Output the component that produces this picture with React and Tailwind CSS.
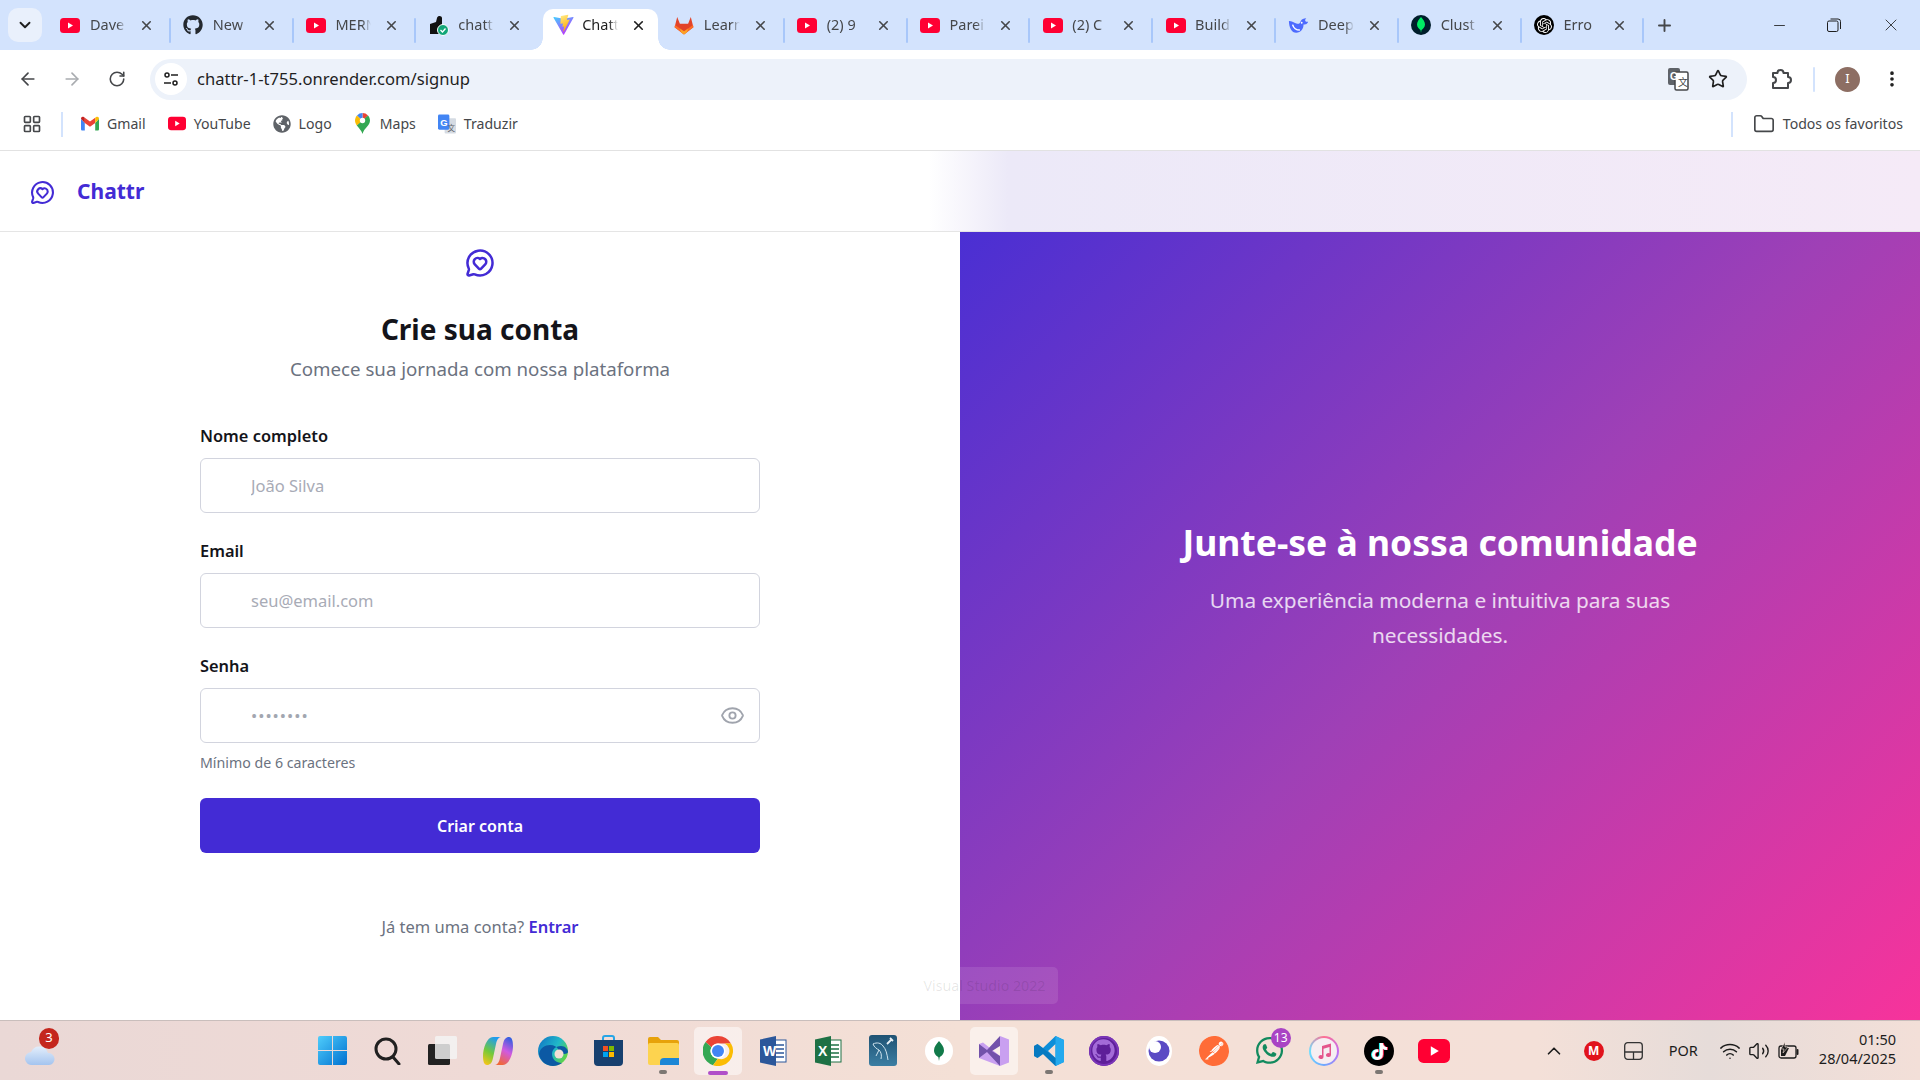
import React from "react";
import {
  ChevronDown, X, ArrowLeft, ArrowRight, RotateCw, Star, EllipsisVertical, LayoutGrid,
  Folder, Eye, MessageCircleHeart, Plus, Minus, ChevronUp, Wifi, Volume2,
} from "lucide-react";
import { FaGithub, FaGlobeAmericas, FaWhatsapp, FaTiktok } from "react-icons/fa";
import { SiOpenai, SiPostman } from "react-icons/si";

const Yt = ({ w = 20, h = 15 }) => (
  <svg width={w} height={h} viewBox="0 0 20 15">
    <rect width="20" height="15" rx="3.5" fill="#ff0033" />
    <path d="M8 4.5v6l5-3z" fill="#fff" />
  </svg>
);

const Vite = () => (
  <svg width="21" height="22" viewBox="0 0 410 404">
    <defs>
      <linearGradient id="vitea" x1="0" y1="0" x2="0.6" y2="1">
        <stop offset="0" stopColor="#41d1ff" />
        <stop offset="1" stopColor="#bd34fe" />
      </linearGradient>
      <linearGradient id="viteb" x1="0.2" y1="0" x2="0.5" y2="1">
        <stop offset="0" stopColor="#ffea83" />
        <stop offset="1" stopColor="#ffa800" />
      </linearGradient>
    </defs>
    <path fill="url(#vitea)" d="M399.641 59.525L215.643 388.545c-3.799 6.793-13.559 6.833-17.415.073L10.582 59.556C6.38 52.19 12.68 43.266 21.028 44.76l184.195 32.923a10 10 0 0 0 3.555-.006L389.119 44.8c8.32-1.516 14.65 7.337 10.522 14.725z" />
    <path fill="url(#viteb)" d="M292.965 1.574L156.801 28.255a5 5 0 0 0-4.03 4.611l-8.376 141.464c-.197 3.332 2.863 5.918 6.115 5.168l37.91-8.749c3.547-.818 6.752 2.306 6.023 5.873l-11.263 55.153c-.758 3.712 2.727 6.886 6.352 5.785l23.415-7.114c3.63-1.102 7.118 2.081 6.35 5.796l-17.899 86.633c-1.12 5.419 6.088 8.374 9.094 3.728l2.008-3.103 110.954-221.428c1.858-3.707-1.346-7.935-5.418-7.15l-39.022 7.532c-3.667.707-6.787-2.708-5.752-6.296l25.469-88.291c1.036-3.594-2.095-7.012-5.766-6.293z" />
  </svg>
);

const Gitlab = () => (
  <svg width="20" height="21" viewBox="0 0 20 20">
    <path d="M10 19L0.6 11.8 3.2 1.5l2.7 6.7h8.2l2.7-6.7 2.6 10.3z" fill="#e24329" />
    <path d="M10 19l-4.1-3.2L0.6 11.8 1 9.5l5 3.5z" fill="#fc6d26" />
    <path d="M10 19l4.1-3.2 5.3-4-.4-2.3-5 3.5z" fill="#fc6d26" />
    <path d="M10 19l-3-2.3-1-3.7 4 2.8 4-2.8-1 3.7z" fill="#fca326" />
  </svg>
);

const Auth = () => (
  <svg width="20" height="21" viewBox="0 0 20 21">
    <path d="M1 9l6-2 1-4c1-3 5-2 5 0v9l-3 7H1z" fill="#111" />
    <circle cx="14" cy="15" r="5.5" fill="#12a678" stroke="#fff" />
    <path d="M11.5 15l2 2 3-3.5" stroke="#fff" strokeWidth="1.3" fill="none" />
  </svg>
);

const Deepseek = () => (
  <svg width="21" height="19" viewBox="0 0 23 20">
    <path d="M1 5c3 0 6 2 9 3 2 .7 3-.5 4-3 1-2 3-3 6-3-1 1-1.500 2-1 3 .5 1 1 1 3 1-1 3-3 3-5 3 0 5-3 9-8 9-5 0-8-6-8-13z" fill="#4d6bfe" />
    <path d="M5 9c1 3.500 4 6 8 6" stroke="#fff" strokeWidth="1.600" fill="none" />
    <circle cx="15" cy="7" r="1" fill="#fff" />
  </svg>
);

const Mongo = () => (
  <span className="flex h-[20px] w-[20px] items-center justify-center rounded-full bg-[#001e2b]">
    <svg width="8" height="16" viewBox="0 0 8 16">
      <path d="M4 0c2 2.500 4 4.500 4 7.500S5.500 12 4.500 13L4 16l-.5-3C2.500 12 0 10.500 0 7.500S2 2.500 4 0z" fill="#00ed64" />
    </svg>
  </span>
);

const Openai = () => (
  <span className="flex h-[20px] w-[20px] items-center justify-center rounded-full bg-black text-white">
    <SiOpenai size={15} />
  </span>
);

const tabs = [
  { title: "Dave", icon: <Yt /> },
  { title: "New", icon: <FaGithub size={20} className="text-[#24292f]" /> },
  { title: "MERN", icon: <Yt /> },
  { title: "chatt", icon: <Auth /> },
  { title: "Chatt", icon: <Vite />, active: true },
  { title: "Learn", icon: <Gitlab /> },
  { title: "(2) 9", icon: <Yt /> },
  { title: "Parei", icon: <Yt /> },
  { title: "(2) C", icon: <Yt /> },
  { title: "Build", icon: <Yt /> },
  { title: "Deep", icon: <Deepseek /> },
  { title: "Clust", icon: <Mongo /> },
  { title: "Erro", icon: <Openai /> },
];

const TabStrip = () => (
  <div className="flex h-[50px] shrink-0 items-center bg-[#d3e3fd] text-[14.500px]">
    <div className="ml-[8px] mr-[6px] flex h-[34px] w-[34px] items-center justify-center rounded-[10px] bg-[#e9f0fc]">
      <ChevronDown size={18} strokeWidth={2.5} className="text-[#1f1f1f]" />
    </div>
    {tabs.map((t, i) => (
      <div key={i} className="relative flex h-[50px] w-[122.800px] items-end">
        {t.active ? (
          <div className="relative mx-[4px] flex h-[41px] w-[115px] items-center rounded-t-[10px] bg-white pb-[9px] pl-[10px]">
            <span className="absolute bottom-0 left-[-12px] h-[12px] w-[12px] bg-[radial-gradient(circle_at_0_0,transparent_11.5px,white_12px)]" />
            <span className="absolute bottom-0 right-[-12px] h-[12px] w-[12px] bg-[radial-gradient(circle_at_100%_0,transparent_11.5px,white_12px)]" />
            <span className="w-[21px]">{t.icon}</span>
            <span className="ml-[8px] w-[36px] whitespace-nowrap text-[#1f1f1f] [mask-image:linear-gradient(90deg,black_75%,transparent)]">{t.title}</span>
            <X size={15} strokeWidth={2.6} className="ml-[13px] text-[#1f1f1f]" />
          </div>
        ) : (
          <div className="flex h-[50px] w-full items-center pl-[12px] pr-[17px]">
            <span className="flex w-[21px] justify-center">{t.icon}</span>
            <span className="ml-[9px] w-[36px] whitespace-nowrap text-[#45474a] [mask-image:linear-gradient(90deg,black_75%,transparent)]">{t.title}</span>
            <X size={15} strokeWidth={2.6} className="ml-[13px] text-[#45474a]" />
          </div>
        )}
        {i !== 3 && i !== 4 && (
          <span className="absolute right-0 top-[18px] h-[25px] w-[2px] rounded-full bg-[#a8c7fa]" />
        )}
      </div>
    ))}
    <Plus size={19} strokeWidth={2.4} className="ml-[11px] text-[#45474a]" />
    <div className="ml-auto flex items-center text-[#1f1f1f]">
      <Minus size={17} strokeWidth={1.2} />
      <svg width="14" height="14" viewBox="0 0 14 14" className="ml-[39px]" fill="none" stroke="#1f1f1f" strokeWidth="1">
        <rect x="0.5" y="3" width="10.500" height="10.500" rx="1.500" />
        <path d="M3.500 1h7.500a2.500 2.500 0 0 1 2.500 2.500V11" />
      </svg>
      <X size={20} strokeWidth={1} className="ml-[40px] mr-[19px]" />
    </div>
  </div>
);

const Toolbar = () => (
  <div className="flex h-[58px] shrink-0 items-center rounded-t-[10px] bg-white text-[#45474a]">
    <ArrowLeft size={20} strokeWidth={2} className="ml-[18px]" />
    <ArrowRight size={20} strokeWidth={2} className="ml-[24px] text-[#a9acb0]" />
    <RotateCw size={18} strokeWidth={2.1} className="ml-[26px]" />
    <div className="ml-[24px] flex h-[41px] w-[1597px] items-center rounded-full bg-[#edf2fa] pl-[5px] pr-[19px]">
      <span className="flex h-[32px] w-[32px] items-center justify-center rounded-full bg-white">
        <svg width="16" height="16" viewBox="0 0 16 16" fill="none" stroke="#1f1f1f" strokeWidth="1.500">
          <circle cx="4" cy="4" r="2" />
          <circle cx="12" cy="12" r="2" />
          <path d="M8 4h7M1 12h7" />
        </svg>
      </span>
      <span className="ml-[10px] text-[16.600px] text-[#1f1f1f]">chattr-1-t755.onrender.com/signup</span>
      <svg width="22" height="24" viewBox="0 0 22 24" className="ml-auto">
        <rect x="1" y="1" width="12" height="17" rx="2" fill="#5f6368" />
        <rect x="8" y="5" width="13" height="18" rx="1.500" fill="#fff" stroke="#45474a" strokeWidth="1.500" />
        <text x="3" y="13" fontSize="10" fontWeight="700" fill="#fff" fontFamily="'Liberation Sans', sans-serif">G</text>
        <text x="11" y="19" fontSize="10" fill="#45474a" fontFamily="'Noto Sans CJK SC', sans-serif">文</text>
      </svg>
      <Star size={20} strokeWidth={2} className="ml-[19px] text-[#1f1f1f]" />
    </div>
    <svg width="24" height="24" viewBox="0 0 24 24" fill="none" stroke="#45474a" strokeWidth="2" strokeLinejoin="round" className="ml-[22px]">
      <path d="M4 6h4.500a3 3 0 0 1 6 0H19v4a3 3 0 0 1 0 6v5H4v-5a3 3 0 0 0 0-6z" />
    </svg>
    <span className="ml-[20px] h-[25px] w-[2px] rounded-full bg-[#d3e3fd]" />
    <span className="ml-[20px] flex h-[25px] w-[25px] items-center justify-center rounded-full bg-[#8d6e63] text-[13px] text-white">I</span>
    <EllipsisVertical size={20} strokeWidth={2.4} className="ml-[22px] text-[#1f1f1f]" />
  </div>
);

const Bookmark = ({ icon, label, gap }) => (
  <div className={`flex items-center gap-[8px] ${gap}`}>
    <span className="flex w-[18px] justify-center">{icon}</span>
    <span>{label}</span>
  </div>
);

const Bookmarks = () => (
  <div className="flex h-[43px] shrink-0 items-center border-b border-[#e2e2e2] bg-white pb-[10px] text-[14.100px] text-[#45474a]">
    <LayoutGrid size={20} strokeWidth={2} className="ml-[22px]" />
    <span className="ml-[19px] h-[25px] w-[2px] bg-[#d3e3fd]" />
    <Bookmark
      gap="ml-[18px]"
      label="Gmail"
      icon={
        <svg width="19" height="15" viewBox="0 0 19 15">
          <path d="M0 2.500v11c0 .8.600 1.500 1.400 1.500H4V7z" fill="#4285f4" />
          <path d="M15 15h2.600c.8 0 1.400-.7 1.400-1.500v-11L15 7z" fill="#34a853" />
          <path d="M4 7l5.500 4L15 7V1.500L9.500 5.500 4 1.500z" fill="#ea4335" />
          <path d="M0 2.500L4 7V1.500L2.500.5C1.400-.2 0 .6 0 2.500z" fill="#c5221f" />
          <path d="M19 2.500L15 7V1.500L16.500.5C17.600-.2 19 .6 19 2.500z" fill="#fbbc04" />
        </svg>
      }
    />
    <Bookmark gap="ml-[22px]" label="YouTube" icon={<Yt />} />
    <Bookmark gap="ml-[22px]" label="Logo" icon={<FaGlobeAmericas size={18} className="text-[#5f6368]" />} />
    <Bookmark
      gap="ml-[22px]"
      label="Maps"
      icon={
        <svg width="15" height="21" viewBox="0 0 15 21">
          <path d="M7.500 0a7.500 7.500 0 0 1 5.500 2.400L7.500 8z" fill="#ea4335" />
          <path d="M2 2.400A7.500 7.500 0 0 1 7.500 0v8z" fill="#4285f4" />
          <path d="M0 7.500c0-2 .8-3.800 2-5.100L7.500 8l-5.700 4.500C.7 11 0 9.300 0 7.500z" fill="#fbbc04" />
          <path d="M1.800 12.500L13 2.400c1.200 1.300 2 3.100 2 5.100 0 5-6 7.500-7.500 13.500-.7-3-3.500-5.800-5.700-8.500z" fill="#34a853" />
          <circle cx="7.500" cy="7.500" r="2.700" fill="#fff" />
        </svg>
      }
    />
    <Bookmark
      gap="ml-[22px]"
      label="Traduzir"
      icon={
        <svg width="19" height="20" viewBox="0 0 19 20">
          <rect x="7" y="4" width="12" height="16" rx="1" fill="#d5dbe3" />
          <rect x="0" y="0" width="12" height="16" rx="1.500" fill="#4285f4" />
          <text x="2.500" y="12" fontSize="10" fontWeight="700" fill="#fff" fontFamily="'Liberation Sans', sans-serif">G</text>
          <text x="10" y="17" fontSize="8" fill="#5f6368" fontFamily="'Noto Sans CJK SC', sans-serif">文</text>
        </svg>
      }
    />
    <span className="ml-auto h-[25px] w-[2px] bg-[#d3e3fd]" />
    <Folder size={22} strokeWidth={1.8} className="ml-[20px]" />
    <span className="ml-[8px] mr-[17px]">Todos os favoritos</span>
  </div>
);

const fields = [
  { label: "Nome completo", placeholder: "João Silva", top: "" },
  { label: "Email", placeholder: "seu@email.com", top: "mt-[25px]" },
];

const Field = ({ label, placeholder, top, children, password }) => (
  <div className={top}>
    <label className="block text-[16.400px] font-semibold leading-[26px] text-[#14141a]">{label}</label>
    <div className="relative mt-[9px]">
      <input
        readOnly
        type={password ? "password" : "text"}
        value={password ? "........" : undefined}
        placeholder={placeholder}
        className={`h-[55px] w-full rounded-[6px] border border-[#d2d4de] bg-white pl-[50px] pr-[50px] text-[16.500px] outline-none ${
          password ? "tracking-[1px] text-[#a2a6b0]" : "placeholder:text-[#a8abb6]"
        }`}
      />
      {children}
    </div>
  </div>
);

const SignupForm = () => (
  <div className="flex w-[960px] flex-col items-center bg-white pt-[16px]">
    <MessageCircleHeart size={30} strokeWidth={2} className="text-[#432bd5]" />
    <h1 className="mt-[31px] text-[28px] font-bold leading-[40px] text-[#14141a]">Crie sua conta</h1>
    <p className="mt-[5px] text-[18.700px] leading-[30px] text-[#6b7280]">Comece sua jornada com nossa plataforma</p>
    <form className="mt-[39px] w-[560px]">
      {fields.map((f) => (
        <Field key={f.label} {...f} />
      ))}
      <Field label="Senha" top="mt-[25px]" password>
        <Eye size={25} strokeWidth={1.8} className="absolute right-[15px] top-[15px] text-[#a0a4ad]" />
      </Field>
      <p className="mt-[10px] text-[14.200px] leading-[20px] text-[#6b7280]">Mínimo de 6 caracteres</p>
      <button type="button" className="mt-[25px] h-[55px] w-full rounded-[6px] bg-[#432bd5] text-[16px] font-semibold text-white">
        Criar conta
      </button>
    </form>
    <p className="mt-[61px] text-[16.500px] leading-[26px] text-[#6b7280]">
      Já tem uma conta? <span className="font-semibold text-[#432bd5]">Entrar</span>
    </p>
  </div>
);

const CommunityPanel = () => (
  <div className="flex flex-1 flex-col items-center justify-center bg-[linear-gradient(135deg,#4a2fd3,#9f40b6_50%,#f7339b)] pb-[82px] text-center text-white">
    <h2 className="text-[35.500px] font-bold leading-[50px]">Junte-se à nossa comunidade</h2>
    <p className="mt-[16px] w-[490px] text-[20.800px] leading-[35px] text-white/80">
      Uma experiência moderna e intuitiva para suas necessidades.
    </p>
  </div>
);

const TaskIcon = ({ children, tile, pill, badge }) => (
  <div className="relative flex h-[60px] w-[55.1px] items-center justify-center">
    {tile && <span className="absolute left-[3.500px] top-[6px] h-[48px] w-[48px] rounded-[5px] bg-white/50" />}
    <span className="relative flex h-[30px] w-[32px] items-center justify-center">{children}</span>
    {badge && (
      <span className="absolute right-[6px] top-[7px] flex h-[20px] w-[20px] items-center justify-center rounded-full bg-[#a944c4] text-[12px] text-white">
        {badge}
      </span>
    )}
    {pill === "gray" && <span className="absolute bottom-[7px] left-[23.500px] h-[4px] w-[8px] rounded-full bg-[#7c7773]" />}
    {pill === "active" && <span className="absolute bottom-[6px] left-[17.500px] h-[4px] w-[20px] rounded-full bg-[#b04fc9]" />}
  </div>
);

const OfficeIcon = ({ letter, color }) => (
  <svg width="28" height="30" viewBox="0 0 28 30">
    <rect x="11" y="4" width="16" height="22" fill="#fff" stroke={color} />
    <path d="M15 9h10M15 13h10M15 17h10M15 21h10" stroke={color} strokeWidth="1.500" />
    <path d="M1 3.500L17 0v30L1 26.500z" fill={color} />
    <text x="4" y="20" fontSize="14" fontWeight="700" fill="#fff" fontFamily="'Liberation Sans', sans-serif">{letter}</text>
  </svg>
);

const taskIcons = [
  {
    node: (
      <svg width="29" height="29" viewBox="0 0 29 29">
        <defs>
          <linearGradient id="win" x1="0" y1="0" x2="1" y2="1">
            <stop offset="0" stopColor="#4fcdfb" />
            <stop offset="1" stopColor="#0070d0" />
          </linearGradient>
        </defs>
        <path d="M0 2a2 2 0 0 1 2-2h12v14H0zM15 0h12a2 2 0 0 1 2 2v12H15zM0 15h14v14H2a2 2 0 0 1-2-2zM15 15h14v12a2 2 0 0 1-2 2H15z" fill="url(#win)" />
      </svg>
    ),
  },
  {
    node: (
      <svg width="28" height="28" viewBox="0 0 28 28" fill="none" stroke="#202020" strokeWidth="3">
        <circle cx="12" cy="12" r="10" />
        <path d="M19 20l6 7" strokeLinecap="round" />
      </svg>
    ),
  },
  {
    node: (
      <svg width="29" height="29" viewBox="0 0 29 29">
        <rect x="0" y="8" width="22" height="21" rx="1.500" fill="#222" />
        <rect x="7" y="0" width="22" height="23" rx="1.500" fill="#f4f4f4" fillOpacity="0.82" />
      </svg>
    ),
  },
  {
    node: (
      <svg width="30" height="30" viewBox="0 0 30 30">
        <defs>
          <linearGradient id="cop1" x1="0.6" y1="0" x2="0.2" y2="1">
            <stop offset="0" stopColor="#1f9cf0" />
            <stop offset="0.55" stopColor="#74c93a" />
            <stop offset="1" stopColor="#f5c518" />
          </linearGradient>
          <linearGradient id="cop2" x1="0.6" y1="0" x2="0.2" y2="1">
            <stop offset="0" stopColor="#f0683a" />
            <stop offset="0.5" stopColor="#d05ae0" />
            <stop offset="1" stopColor="#2b5fe0" />
          </linearGradient>
        </defs>
        <path d="M10 1h8c-3 .5-4 3-5 7l-3 14c-1 5-3 7-6 7-3 0-4-4-4-9 0-8 4-19 10-19z" fill="url(#cop1)" />
        <path d="M10 1h8c-3 .5-4 3-5 7l-3 14c-1 5-3 7-6 7-3 0-4-4-4-9 0-8 4-19 10-19z" fill="url(#cop2)" transform="rotate(180 15 15)" />
      </svg>
    ),
  },
  {
    node: (
      <svg width="30" height="30" viewBox="0 0 30 30">
        <defs>
          <linearGradient id="edg" x1="0" y1="0" x2="1" y2="0.6">
            <stop offset="0" stopColor="#0f6fc5" />
            <stop offset="0.6" stopColor="#20b8c8" />
            <stop offset="1" stopColor="#5ed44a" />
          </linearGradient>
        </defs>
        <circle cx="15" cy="15" r="15" fill="url(#edg)" />
        <path d="M30 16c0-3-3-6-7-6-6 0-9 4-9 8 0 5 4 9 10 9-3 2-6 3-9 3C8 30 2 25 1 18c1-6 6-9 11-9 4 0 7 2 8 4 1 2 0 4-1 5h7c2 0 4-1 4-2z" fill="#0c59a4" />
        <circle cx="21" cy="18" r="4.500" fill="#f3dfd6" />
      </svg>
    ),
  },
  {
    node: (
      <svg width="29" height="31" viewBox="0 0 29 31">
        <path d="M9 6V3a2 2 0 0 1 2-2h7a2 2 0 0 1 2 2v3" fill="none" stroke="#27a5e6" strokeWidth="2" />
        <path d="M0 5h29v22a4 4 0 0 1-4 4H4a4 4 0 0 1-4-4z" fill="#17406f" />
        <rect x="9" y="11" width="5" height="5" fill="#f25022" />
        <rect x="15" y="11" width="5" height="5" fill="#7fba00" />
        <rect x="9" y="17" width="5" height="5" fill="#00a4ef" />
        <rect x="15" y="17" width="5" height="5" fill="#ffb900" />
      </svg>
    ),
  },
  {
    pill: "gray",
    node: (
      <svg width="31" height="28" viewBox="0 0 31 28">
        <path d="M0 2a2 2 0 0 1 2-2h8l3 3h16a2 2 0 0 1 2 2v4H0z" fill="#e7a20a" />
        <rect x="0" y="6" width="31" height="22" rx="2" fill="#fdd34f" />
        <path d="M12 28v-3a4 4 0 0 1 4-4h15v7z" fill="#1c86d6" />
      </svg>
    ),
  },
  {
    tile: true,
    pill: "active",
    node: (
      <svg width="30" height="30" viewBox="0 0 30 30">
        <path d="M15 0a15 15 0 0 1 13 7.500H15a7.500 7.500 0 0 0-6.500 3.750L2.500 6A15 15 0 0 1 15 0z" fill="#ea4335" />
        <path d="M2.500 6l6 5.250A7.500 7.500 0 0 0 15 22.500L10 29.200A15 15 0 0 1 2.500 6z" fill="#34a853" />
        <path d="M28 7.500A15 15 0 0 1 10 29.200l5-6.700a7.500 7.500 0 0 0 6.500-15z" fill="#fbbc04" />
        <circle cx="15" cy="15" r="7.500" fill="#fff" />
        <circle cx="15" cy="15" r="6" fill="#4285f4" />
      </svg>
    ),
  },
  { node: <OfficeIcon letter="W" color="#2b579a" /> },
  { node: <OfficeIcon letter="X" color="#1e7145" /> },
  {
    node: (
      <svg width="28" height="31" viewBox="0 0 28 31">
        <defs>
          <linearGradient id="wb" x1="0" y1="0" x2="0" y2="1">
            <stop offset="0" stopColor="#1f5273" />
            <stop offset="1" stopColor="#3b7ea3" />
          </linearGradient>
        </defs>
        <rect width="28" height="31" rx="3" fill="url(#wb)" />
        <path d="M4 9c4-2 8-1 10 2 3 3 4 8 5 14M4 9c1 3 4 5 6 6 2 2 3 5 2 9M10 15l-3 6" fill="none" stroke="#cfe3ee" strokeWidth="1" />
        <path d="M18 9l5-5M21 3l3 3" fill="none" stroke="#e8f1f6" strokeWidth="1.800" />
      </svg>
    ),
  },
  {
    node: (
      <span className="flex h-[28px] w-[28px] items-center justify-center rounded-full bg-white">
        <svg width="10" height="20" viewBox="0 0 8 16">
          <path d="M4 0c2 2.500 4 4.500 4 7.500S5.500 12 4.500 13L4 16l-.5-3C2.500 12 0 10.500 0 7.500S2 2.500 4 0z" fill="#117a4a" />
        </svg>
      </span>
    ),
  },
  {
    tile: true,
    node: (
      <svg width="30" height="30" viewBox="0 0 30 30">
        <path d="M21 0l9 3.500v23L21 30 0 22V8l4-1.500L21 20z" fill="#c9a0f0" />
        <path d="M21 0L8 14 0 8v14l8-6 13 14V20L13 15l8-5z" fill="#7252aa" />
      </svg>
    ),
  },
  {
    pill: "gray",
    node: (
      <svg width="30" height="30" viewBox="0 0 30 30">
        <path d="M21.500 0L30 4v22l-8.500 4L9 18l-5.500 4L0 20v-10l3.500-2L9 12zM21.500 8L14 15l7.500 7z" fill="#0c8ed9" />
        <path d="M21.500 0L30 4v22l-8.500 4z" fill="#23a9ee" />
        <path d="M0 10l3.500-2L21.500 22v8L9 18l-5.500 4L0 20z" fill="#0065a9" fillOpacity="0.5" />
      </svg>
    ),
  },
  {
    node: (
      <span className="flex h-[30px] w-[30px] items-center justify-center rounded-full bg-[#5e1f99] ring-[2px] ring-inset ring-[#7a35b8]">
        <FaGithub size={23} className="text-[#a36ad8]" />
      </span>
    ),
  },
  {
    node: (
      <svg width="28" height="30" viewBox="0 0 28 30">
        <ellipse cx="14" cy="15" rx="13" ry="15" fill="#fff" />
        <circle cx="14" cy="15" r="10.500" fill="#5b4bc4" />
        <circle cx="10" cy="11" r="6" fill="#fff" />
      </svg>
    ),
  },
  {
    node: (
      <span className="flex h-[30px] w-[30px] items-center justify-center rounded-full bg-white text-[#ff6c37]">
        <SiPostman size={30} />
      </span>
    ),
  },
  { node: <FaWhatsapp size={31} className="text-[#128a5e]" />, badge: "13" },
  {
    node: (
      <span className="flex h-[30px] w-[30px] items-center justify-center rounded-full bg-[conic-gradient(#ff6f91,#c46bf0,#6fa8ff,#6fe0ff,#ff6f91)] p-[2px]">
        <span className="flex h-full w-full items-center justify-center rounded-full bg-[#f6eef2]">
          <svg width="15" height="16" viewBox="0 0 15 16" fill="#e4558b">
            <path d="M5 3l9-2.500V12a2.500 2 0 1 1-1.500-1.800V4L6.500 5.700V14a2.500 2 0 1 1-1.500-1.800z" />
          </svg>
        </span>
      </span>
    ),
  },
  {
    pill: "gray",
    node: (
      <span className="relative flex h-[30px] w-[30px] items-center justify-center rounded-full bg-black text-white">
        <FaTiktok size={17} className="absolute left-[6px] top-[7px] text-[#25f4ee]" />
        <FaTiktok size={17} className="absolute left-[8px] top-[7px] text-[#fe2c55]" />
        <FaTiktok size={17} className="absolute left-[7px] top-[7px] text-white" />
      </span>
    ),
  },
  { node: <Yt w={32} h={24} /> },
];

const Taskbar = () => (
  <div className="relative flex h-[60px] shrink-0 items-center border-t border-[#c9bebc] bg-[linear-gradient(90deg,#ead8d6_0%,#efdad6_25%,#f4e0d6_50%,#f4e0d8_80%,#e6dcd9_89%,#f3dfd8_100%)] text-[#1c1c1c]">
    <div className="relative ml-[25px] flex h-[60px] w-[36px] items-center">
      <svg width="30" height="20" viewBox="0 0 30 20" className="mt-[9px]">
        <defs>
          <linearGradient id="cloud" x1="0" y1="0" x2="0" y2="1">
            <stop offset="0" stopColor="#e3eefb" />
            <stop offset="1" stopColor="#a4c4ef" />
          </linearGradient>
        </defs>
        <path d="M7 20a6.500 6.500 0 0 1-1-13 9 9 0 0 1 17 1 6 6 0 0 1 1 12z" fill="url(#cloud)" />
      </svg>
      <span className="absolute left-[14px] top-[7px] flex h-[21px] w-[20px] items-center justify-center rounded-full bg-[#c4261d] text-[13px] text-white">3</span>
    </div>
    <div className="ml-[244px] flex">
      {taskIcons.map((t, i) => (
        <TaskIcon key={i} tile={t.tile} pill={t.pill} badge={t.badge}>
          {t.node}
        </TaskIcon>
      ))}
    </div>
    <div className="ml-auto flex items-center">
      <ChevronUp size={22} strokeWidth={1.8} />
      <span className="ml-[19px] flex h-[20px] w-[20px] items-center justify-center rounded-full bg-[#e1131c] text-[12px] font-bold text-white">M</span>
      <svg width="19" height="18" viewBox="0 0 19 18" fill="none" stroke="#333" strokeWidth="1.300" className="ml-[20px]">
        <rect x="0.700" y="0.700" width="17.600" height="16.600" rx="3" />
        <path d="M0.700 10h17.600M9.500 10v7.300" />
      </svg>
      <span className="ml-[26px] text-[14.500px]">POR</span>
      <Wifi size={22} strokeWidth={1.7} className="ml-[21px]" />
      <Volume2 size={22} strokeWidth={1.5} className="ml-[7px]" />
      <svg width="22" height="18" viewBox="0 0 22 18" fill="none" className="ml-[8px]">
        <rect x="1" y="4" width="17" height="12" rx="2" stroke="#1c1c1c" strokeWidth="1.300" />
        <path d="M19.500 8v4" stroke="#1c1c1c" strokeWidth="2" strokeLinecap="round" />
        <path d="M3 14V6h8l-4 8z" fill="#1c1c1c" />
        <path d="M7 0L3 7h3l-1 4 5-6H7z" fill="#1c1c1c" stroke="#f4e0d8" strokeWidth="0.600" />
      </svg>
      <div className="mb-[3px] ml-[19px] mr-[24px] text-right text-[14.500px] leading-[19px]">
        <div>01:50</div>
        <div>28/04/2025</div>
      </div>
    </div>
  </div>
);

const App = () => {
  return (
    <div className="flex h-screen w-full flex-col overflow-hidden bg-white font-['Noto_Sans','Open_Sans',sans-serif]">
      <TabStrip />
      <Toolbar />
      <Bookmarks />
      <nav className="flex h-[81px] shrink-0 items-center border-b border-[#e5e5e5] bg-[linear-gradient(90deg,#ffffff_48.400%,#ece9f8_52.500%,#f5eaf7_100%)] pl-[30px] pt-[2px]">
        <MessageCircleHeart size={25} strokeWidth={2} className="text-[#432bd5]" />
        <span className="ml-[22px] text-[21px] font-bold text-[#432bd5]">Chattr</span>
      </nav>
      <div className="relative flex min-h-0 flex-1">
        <SignupForm />
        <CommunityPanel />
        <div className="absolute left-[911px] top-[735px] flex h-[37px] w-[147px] items-center justify-center rounded-[5px] bg-white/10 text-[14.200px] text-black/10">
          Visual Studio 2022
        </div>
      </div>
      <Taskbar />
    </div>
  );
};

export default App;
